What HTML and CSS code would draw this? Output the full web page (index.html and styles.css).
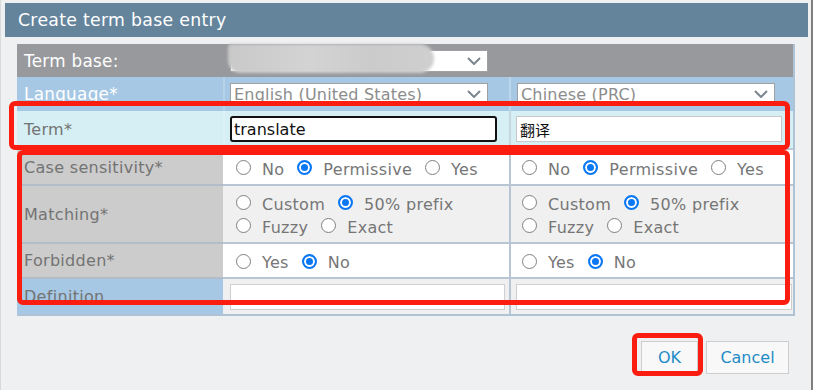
FILE: index.html
```html
<!DOCTYPE html>
<html>
<head>
<meta charset="utf-8">
<link rel="stylesheet" href="styles.css">
</head>
<body>
<div class="dialog">
  <div class="title">Create term base entry</div>
  <div class="table">
    <div class="row row-tb">
      <div class="label label-head">Term base:</div>
      <div class="cell cell-a"><div class="select select-tb"><span class="sel-text"></span><svg class="chev" width="14" height="8" viewBox="0 0 14 8"><polyline points="1,1 7,7 13,1" fill="none" stroke="#7c868e" stroke-width="2"/></svg></div></div>
      <div class="cell cell-b cell-nosep"></div>
    </div>
    <div class="row row-lang">
      <div class="label label-head">Language*</div>
      <div class="cell cell-a"><div class="select select-a"><span class="sel-text">English (United States)</span><svg class="chev" width="14" height="8" viewBox="0 0 14 8"><polyline points="1,1 7,7 13,1" fill="none" stroke="#7c868e" stroke-width="2"/></svg></div></div>
      <div class="cell cell-b"><div class="select select-b"><span class="sel-text">Chinese (PRC)</span><svg class="chev" width="14" height="8" viewBox="0 0 14 8"><polyline points="1,1 7,7 13,1" fill="none" stroke="#7c868e" stroke-width="2"/></svg></div></div>
    </div>
    <div class="row row-term">
      <div class="label">Term*</div>
      <div class="cell cell-a"><div class="input input-focus">translate</div></div>
      <div class="cell cell-b"><div class="input input-b input-cjk">翻译</div></div>
    </div>
    <div class="row row-opt row-white row-case">
      <div class="label">Case sensitivity*</div>
      <div class="cell cell-a radios">
        <span class="opt"><span class="radio"></span>No</span>
        <span class="opt"><span class="radio on"></span>Permissive</span>
        <span class="opt"><span class="radio"></span>Yes</span>
      </div>
      <div class="cell cell-b radios">
        <span class="opt"><span class="radio"></span>No</span>
        <span class="opt"><span class="radio on"></span>Permissive</span>
        <span class="opt"><span class="radio"></span>Yes</span>
      </div>
    </div>
    <div class="row row-opt row-grey row-match">
      <div class="label">Matching*</div>
      <div class="cell cell-a radios-wrap">
        <div class="radios"><span class="opt"><span class="radio"></span>Custom</span><span class="opt"><span class="radio on"></span>50% prefix</span></div>
        <div class="radios"><span class="opt"><span class="radio"></span>Fuzzy</span><span class="opt"><span class="radio"></span>Exact</span></div>
      </div>
      <div class="cell cell-b radios-wrap">
        <div class="radios"><span class="opt"><span class="radio"></span>Custom</span><span class="opt"><span class="radio on"></span>50% prefix</span></div>
        <div class="radios"><span class="opt"><span class="radio"></span>Fuzzy</span><span class="opt"><span class="radio"></span>Exact</span></div>
      </div>
    </div>
    <div class="row row-opt row-white row-forb">
      <div class="label">Forbidden*</div>
      <div class="cell cell-a radios">
        <span class="opt"><span class="radio"></span>Yes</span>
        <span class="opt"><span class="radio on"></span>No</span>
      </div>
      <div class="cell cell-b radios">
        <span class="opt"><span class="radio"></span>Yes</span>
        <span class="opt"><span class="radio on"></span>No</span>
      </div>
    </div>
    <div class="row row-def">
      <div class="label label-blue">Definition</div>
      <div class="cell cell-a"><div class="input input-def"></div></div>
      <div class="cell cell-b"><div class="input input-def input-def-b"></div></div>
    </div>
  </div>
  <div class="actions">
    <button class="btn btn-ok">OK</button>
    <button class="btn btn-cancel">Cancel</button>
  </div>
</div>
<div class="smudge"></div>
<div class="mark mark-term"></div>
<div class="mark mark-opts"></div>
<div class="mark mark-ok"></div>
</body>
</html>
```

FILE: styles.css
```css
html, body {
  margin: 0;
  padding: 0;
}
body {
  width: 813px;
  height: 390px;
  overflow: hidden;
  background: #7f7f7f;
  font-family: "DejaVu Sans", Verdana, sans-serif;
  position: relative;
}
.dialog {
  width: 811px;
  height: 390px;
  box-sizing: border-box;
  padding: 3px 3px 0 4px;
  background: #eff0f2;
  border-left: 1px solid #d8d9db;
}
.title {
  height: 34px;
  background: #64849c;
  color: #ffffff;
  font-size: 17.3px;
  letter-spacing: 0.3px;
  padding-left: 13px;
  display: flex;
  align-items: center;
}
.table {
  margin: 7px 0 0 12px;
  width: 778px;
  box-sizing: border-box;
  border-right: 2px solid #aec3d6;
  border-bottom: 2px solid #aec3d6;
}
.row {
  display: grid;
  grid-template-columns: 206px 286px 284px;
  box-sizing: border-box;
}
.label {
  display: flex;
  align-items: center;
  padding-left: 7px;
  font-size: 16px;
  letter-spacing: 0.3px;
  color: #737373;
  white-space: nowrap;
}
.label-head {
  color: #ffffff;
  font-size: 16.8px;
}
.cell {
  display: flex;
  align-items: center;
  box-sizing: border-box;
}
.cell-a {
  padding-left: 7px;
}
.cell-b {
  border-left: 2px solid rgba(255, 255, 255, 0.25);
  padding-left: 5px;
}
.cell-nosep {
  border-left-color: transparent;
}
.row-tb {
  height: 33px;
  background: #98999d;
}
.row-lang {
  height: 34px;
  background: #a6c8e4;
}
.row-lang .cell-a, .row-term .cell-a {
  border-left: 2px solid rgba(255, 255, 255, 0.18);
  padding-left: 5px;
}
.row-term {
  height: 39px;
  background: #d6eff4;
}
.row-term .label {
  border-bottom: 2px solid #c2dbe4;
  padding-bottom: 1px;
}
.row-term .cell {
  border-bottom: 2px solid #b8cdd8;
  padding-bottom: 1px;
}
.row-term .cell-b {
  border-left-color: #c4d6e0;
}
.row-opt .label {
  background: #cccccc;
  border-bottom: 2px solid #b2bdc9;
}
.row-opt .cell {
  border-bottom: 2px solid #b8c6d4;
}
.row-opt .cell-a {
  padding-left: 13px;
}
.row-opt .cell-b {
  border-left: 2px solid #b8c6d4;
  padding-left: 11px;
}
.row-white .cell {
  background: #ffffff;
}
.row-case {
  height: 36px;
}
.row-case .cell {
  padding-top: 2px;
}
.row-grey {
  height: 58px;
}
.row-grey .cell {
  background: #f0f0f0;
  padding-top: 1px;
}
.row-forb {
  height: 35px;
}
.row-forb .cell {
  padding-top: 2px;
}
.row-def {
  height: 35px;
}
.label-blue {
  background: #a6c8e4;
}
.row-def .cell {
  background: #f0f0f0;
}
.row-def .cell-b {
  border-left: 2px solid #b8c6d4;
}
.select {
  height: 23px;
  box-sizing: border-box;
  background: #ffffff;
  border: 1px solid #a0a0a0;
  display: flex;
  align-items: center;
  justify-content: space-between;
  padding: 0 6px 0 3px;
}
.select-tb {
  width: 258px;
  height: 22px;
}
.select-a {
  width: 258px;
}
.select-b {
  width: 258px;
  margin-left: 1px;
}
.sel-text {
  font-size: 16px;
  color: #8c8c8c;
  letter-spacing: 0.2px;
  white-space: nowrap;
}
.chev {
  flex: none;
}
.input {
  height: 26px;
  box-sizing: border-box;
  background: #ffffff;
  font-size: 16px;
  color: #111111;
  display: flex;
  align-items: center;
  padding-left: 2px;
}
.input-focus {
  width: 267px;
  border: 2px solid #111111;
  border-radius: 3px;
}
.input-b {
  width: 266px;
  border: 1px solid #c8c8c8;
}
.input-cjk {
  font-family: "Noto Sans CJK SC", sans-serif;
  font-size: 15px;
  padding-left: 3px;
}
.input-def {
  width: 275px;
  border: 1px solid #cfcfcf;
  margin-top: 1px;
}
.input-def-b {
  width: 276px;
}
.radios {
  display: flex;
  align-items: center;
}
.radios-wrap {
  flex-direction: column;
  align-items: flex-start;
  justify-content: center;
}
.radios-wrap .radios {
  height: 23px;
}
.opt {
  display: inline-flex;
  align-items: center;
  font-size: 16px;
  letter-spacing: 0.3px;
  color: #767676;
  margin-right: 13px;
  white-space: nowrap;
  padding-top: 2px;
}
.radio {
  width: 15px;
  height: 15px;
  box-sizing: border-box;
  border-radius: 50%;
  border: 1.5px solid #808080;
  background: #ffffff;
  margin-right: 11px;
  margin-top: -3px;
  flex: none;
}
.radio.on {
  border: 2px solid #0a78f5;
  background: #0a78f5;
  box-shadow: inset 0 0 0 2px #ffffff;
}
.actions {
  display: flex;
  justify-content: flex-end;
  gap: 8px;
  margin-top: 25px;
  padding-right: 19px;
}
.btn {
  height: 33px;
  box-sizing: border-box;
  background: #f8f8f8;
  border: 1px solid #cdcdcd;
  font-family: "DejaVu Sans", Verdana, sans-serif;
  font-size: 16px;
  color: #1f8bc7;
  padding: 0;
  margin: 0;
}
.btn-ok {
  width: 57px;
}
.btn-cancel {
  width: 83px;
}
.smudge {
  position: absolute;
  left: 228px;
  top: 44px;
  width: 206px;
  height: 29px;
  border-radius: 4px 16px 16px 14px;
  background: linear-gradient(90deg, #c9c9c9, #d3d3d3 40%, #cbcbcb 70%, #cfcfcf);
  filter: blur(1.5px);
}
.mark {
  position: absolute;
  border: 5px solid #fa1d10;
  border-radius: 6px;
  box-sizing: border-box;
}
.mark-term {
  left: 9px;
  top: 101px;
  width: 781px;
  height: 49px;
}
.mark-opts {
  left: 17px;
  top: 150px;
  width: 773px;
  height: 155px;
}
.mark-ok {
  left: 632px;
  top: 333px;
  width: 71px;
  height: 43px;
}
```
